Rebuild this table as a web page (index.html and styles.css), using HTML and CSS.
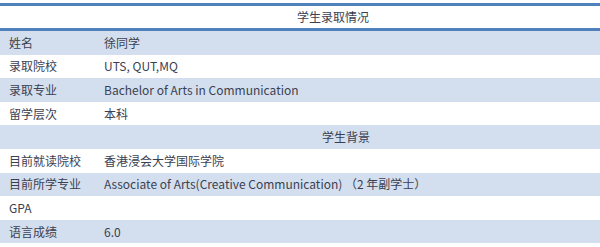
FILE: index.html
```html
<!DOCTYPE html>
<html lang="zh">
<head>
<meta charset="utf-8">
<link rel="stylesheet" href="styles.css">
</head>
<body>
<table class="info">
  <colgroup><col class="c-label"><col class="c-value"></colgroup>
  <tr class="head"><th colspan="2" class="title">学生录取情况</th></tr>
  <tr class="alt"><td>姓名</td><td>徐同学</td></tr>
  <tr><td>录取院校</td><td>UTS, QUT,MQ</td></tr>
  <tr class="alt"><td>录取专业</td><td>Bachelor of Arts in Communication</td></tr>
  <tr><td>留学层次</td><td>本科</td></tr>
  <tr class="alt"><td colspan="2" class="section">学生背景</td></tr>
  <tr><td>目前就读院校</td><td>香港浸会大学国际学院</td></tr>
  <tr class="alt"><td>目前所学专业</td><td>Associate of Arts(Creative Communication) （2 年副学士）</td></tr>
  <tr><td>GPA</td><td></td></tr>
  <tr class="alt"><td>语言成绩</td><td>6.0</td></tr>
</table>
</body>
</html>
```
FILE: styles.css
```css
html, body {
  margin: 0;
  padding: 0;
  background: #fff;
}
body {
  padding-top: 3px;
  font-family: "Noto Sans CJK SC", "Noto Sans", sans-serif;
  font-size: 12px;
  color: #3b3f52;
}
.info {
  width: 600px;
  border-collapse: collapse;
  border-top: 3px solid #4f81bd;
}
.c-label { width: 104px; }
.info td, .info th {
  padding: 0 0 0 9px;
  height: 23.6px;
  line-height: 16px;
  text-align: left;
  font-weight: normal;
  vertical-align: middle;
  white-space: nowrap;
}
.info td + td { padding-left: 0; }
.info .head th {
  height: 22px;
  border-bottom: 3px solid #4f81bd;
}
.info .title {
  padding-left: 297px;
}
.info .section {
  padding-left: 322px;
}
.alt { background: #d3dfee; }
```
